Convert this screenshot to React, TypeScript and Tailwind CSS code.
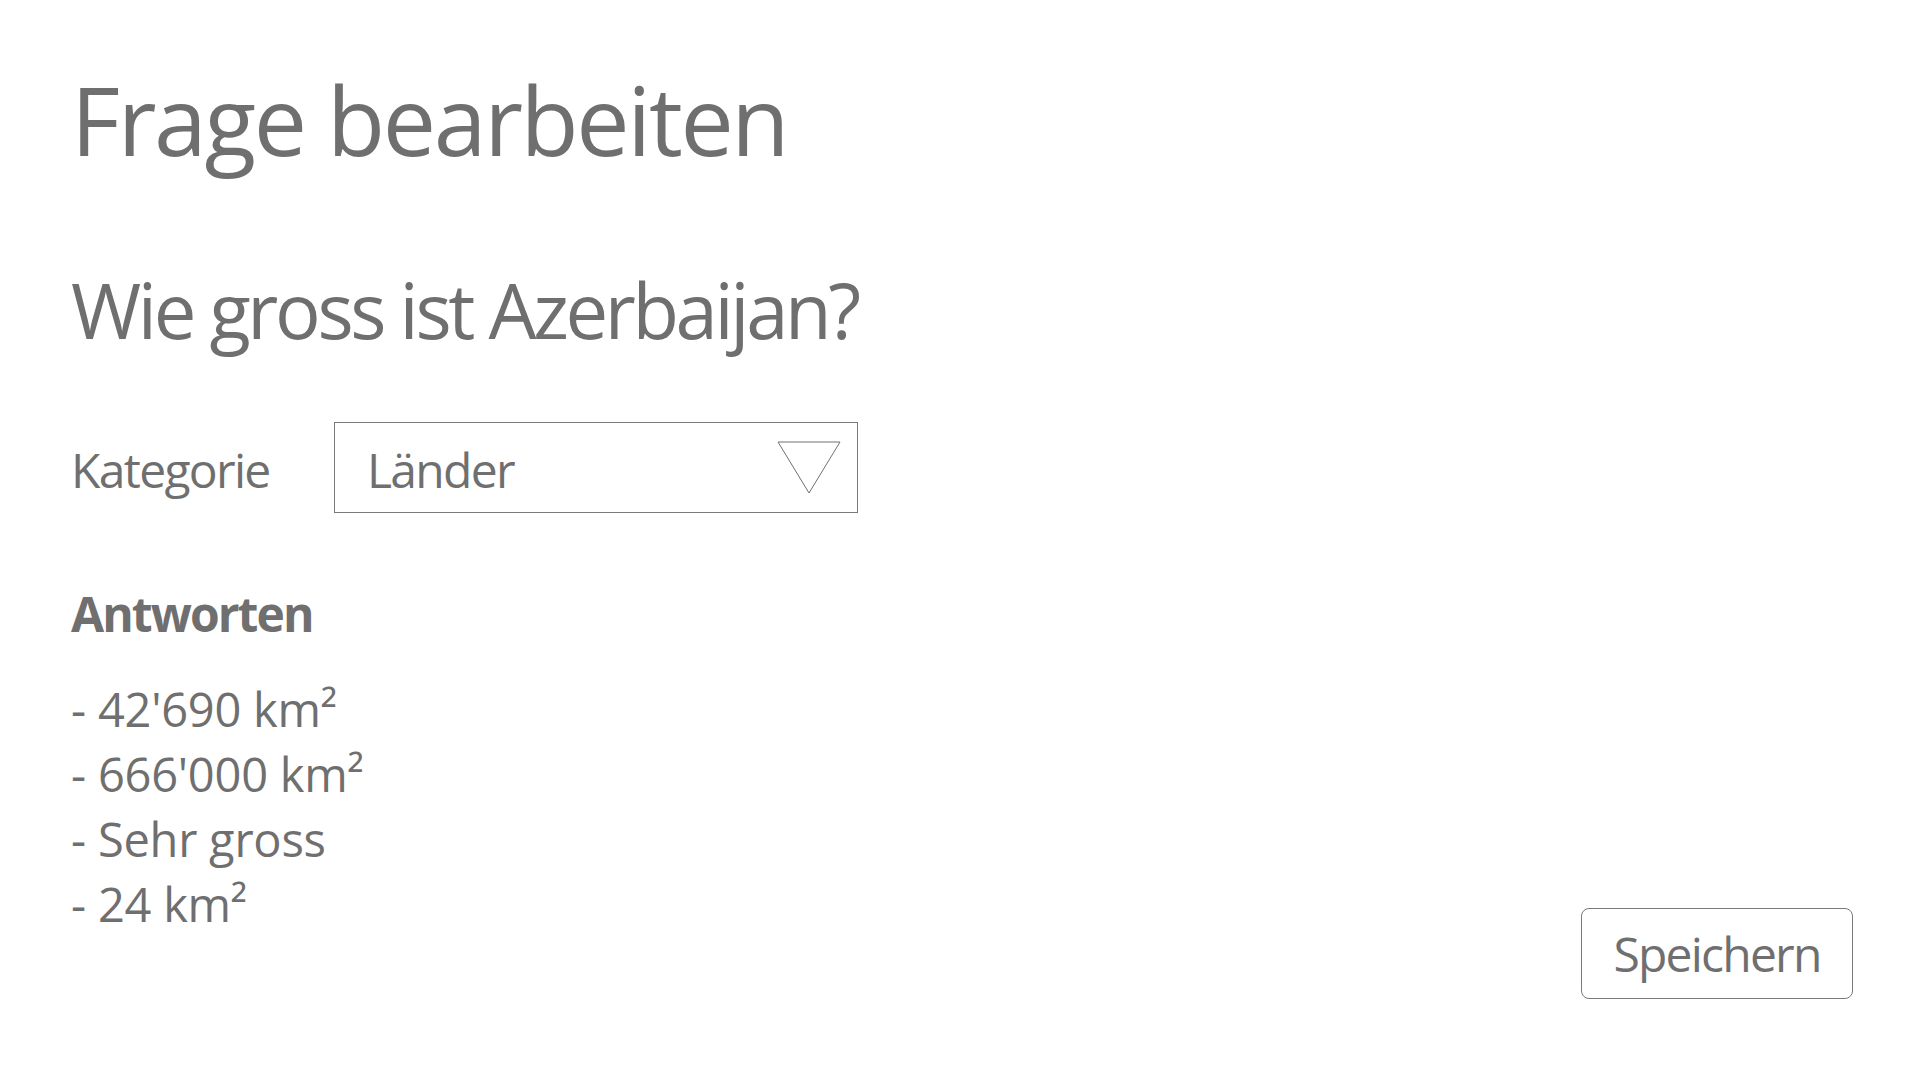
const font = "font-['Open_Sans','Noto_Sans',sans-serif]";

const answers = ["42'690 km²", "666'000 km²", "Sehr gross", "24 km²"];

function DropTriangle() {
  return (
    <svg width="64" height="53" viewBox="0 0 64 53" className="shrink-0">
      <polygon points="1,1 63,1 32,52" fill="none" stroke="#707070" strokeWidth="1" />
    </svg>
  );
}

export default function App() {
  return (
    <div className={`${font} min-h-screen bg-white text-[#6f6f6f] pl-[71px] pr-[67px] pt-[69px]`}>
      <h1 className="text-[95px] leading-[100px] tracking-[-0.025em] font-normal">Frage bearbeiten</h1>

      <h2 className="mt-[101px] text-[76px] leading-[80px] tracking-[-0.044em] font-normal">
        Wie gross ist Azerbaijan?
      </h2>

      <div className="mt-[72px] flex items-center">
        <span className="w-[263px] mt-[4px] text-[48px] leading-[60px] tracking-[-0.035em]">Kategorie</span>
        <div className="w-[524px] h-[91px] border border-[#7a7a7a] flex items-center justify-between pl-[32px] pr-[16px]">
          <span className="mt-[4px] text-[48px] leading-[60px] tracking-[-0.035em]">Länder</span>
          <DropTriangle />
        </div>
      </div>

      <h3 className="mt-[73px] text-[48px] leading-[56px] tracking-[-0.04em] font-bold">Antworten</h3>

      <div className="mt-[35px] flex justify-between items-start">
        <ul className="text-[47px] leading-[65px] tracking-[-0.005em]">
          {answers.map((a) => (
            <li key={a}>- {a}</li>
          ))}
        </ul>
        <button className="mt-[231px] w-[272px] h-[91px] border border-[#7a7a7a] rounded-lg text-[48px] leading-[60px] tracking-[-0.037em] text-[#6f6f6f]">
          Speichern
        </button>
      </div>
    </div>
  );
}
